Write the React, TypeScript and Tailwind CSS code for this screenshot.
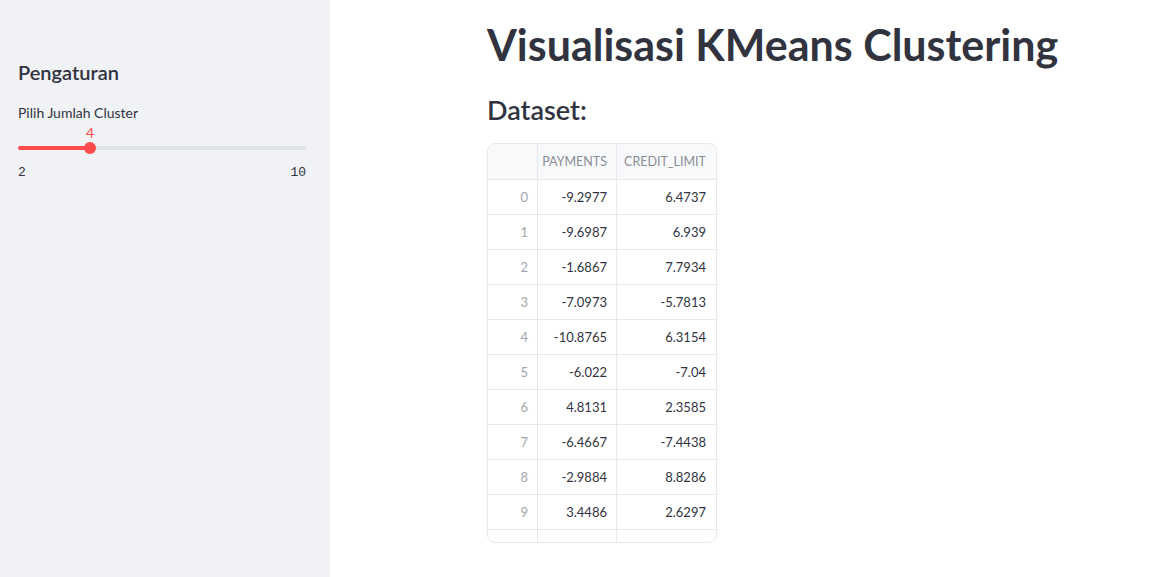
import React from "react";

const rows: [number, string, string][] = [
  [0, "-9.2977", "6.4737"],
  [1, "-9.6987", "6.939"],
  [2, "-1.6867", "7.7934"],
  [3, "-7.0973", "-5.7813"],
  [4, "-10.8765", "6.3154"],
  [5, "-6.022", "-7.04"],
  [6, "4.8131", "2.3585"],
  [7, "-6.4667", "-7.4438"],
  [8, "-2.9884", "8.8286"],
  [9, "3.4486", "2.6297"],
];

export default function App() {
  return (
    <div
      className="flex w-[1175px] h-[577px] overflow-hidden bg-white text-[#31333f]"
      style={{ fontFamily: 'Lato, "Noto Sans", sans-serif' }}
    >
      <aside className="w-[330px] shrink-0 bg-[#f0f2f6] px-[18px] pt-[58px]">
        <h2 className="text-[20px] font-semibold leading-[28px]">Pengaturan</h2>
        <div className="mt-[17px] text-[14px] leading-[20px]">Pilih Jumlah Cluster</div>
        <div className="relative mt-0 h-[47px] w-[288px]">
          <div className="absolute left-[66px] top-[1px] w-[12px] text-center text-[14px] leading-[18px] text-[#ff4b4b]">
            4
          </div>
          <div className="absolute left-0 top-[23px] h-[4px] w-[288px] rounded-full bg-[#dfe1e8]" />
          <div className="absolute left-0 top-[23px] h-[4px] w-[72px] rounded-full bg-[#ff4b4b]" />
          <div className="absolute left-[66px] top-[19px] h-[12px] w-[12px] rounded-full bg-[#ff4b4b]" />
        </div>
        <div
          className="-mt-[6px] flex w-[288px] justify-between text-[13px] leading-[18px]"
          style={{ fontFamily: '"Liberation Mono", "DejaVu Sans Mono", monospace' }}
        >
          <span>2</span>
          <span>10</span>
        </div>
      </aside>
      <main className="flex-1 pl-[157px] pt-[16px]">
        <h1 className="text-[43px] font-bold leading-[58px]">Visualisasi KMeans Clustering</h1>
        <h3 className="mt-[18px] text-[27px] font-semibold leading-[36px]">Dataset:</h3>
        <div className="mt-[15px] h-[400px] w-[230px] overflow-hidden rounded-[8px] border border-[#e6e8ee]">
          <div className="flex h-[36px] border-b border-[#e6e8ee] bg-[#f8f9fb] text-[12.5px] text-[#8b8d96]">
            <div className="w-[50px] shrink-0 border-r border-[#e6e8ee]" />
            <div className="flex w-[79px] shrink-0 items-center justify-end border-r border-[#e6e8ee] pr-[9px] pt-[2px]">
              PAYMENTS
            </div>
            <div className="flex flex-1 items-center justify-end pr-[10px] pt-[2px]">CREDIT_LIMIT</div>
          </div>
          {rows.map(([i, a, b]) => (
            <div key={i} className="flex h-[35px] border-b border-[#e6e8ee] text-[13px]">
              <div className="flex w-[50px] shrink-0 items-center justify-end border-r border-[#e6e8ee] pr-[9px] pt-[2px] text-[#a3a5ad]">
                {i}
              </div>
              <div className="flex w-[79px] shrink-0 items-center justify-end border-r border-[#e6e8ee] pr-[9px] pt-[2px]">
                {a}
              </div>
              <div className="flex flex-1 items-center justify-end pr-[10px] pt-[2px]">{b}</div>
            </div>
          ))}
          <div className="flex h-[35px] text-[13px]">
            <div className="w-[50px] shrink-0 border-r border-[#e6e8ee]" />
            <div className="w-[79px] shrink-0 border-r border-[#e6e8ee]" />
          </div>
        </div>
      </main>
    </div>
  );
}
